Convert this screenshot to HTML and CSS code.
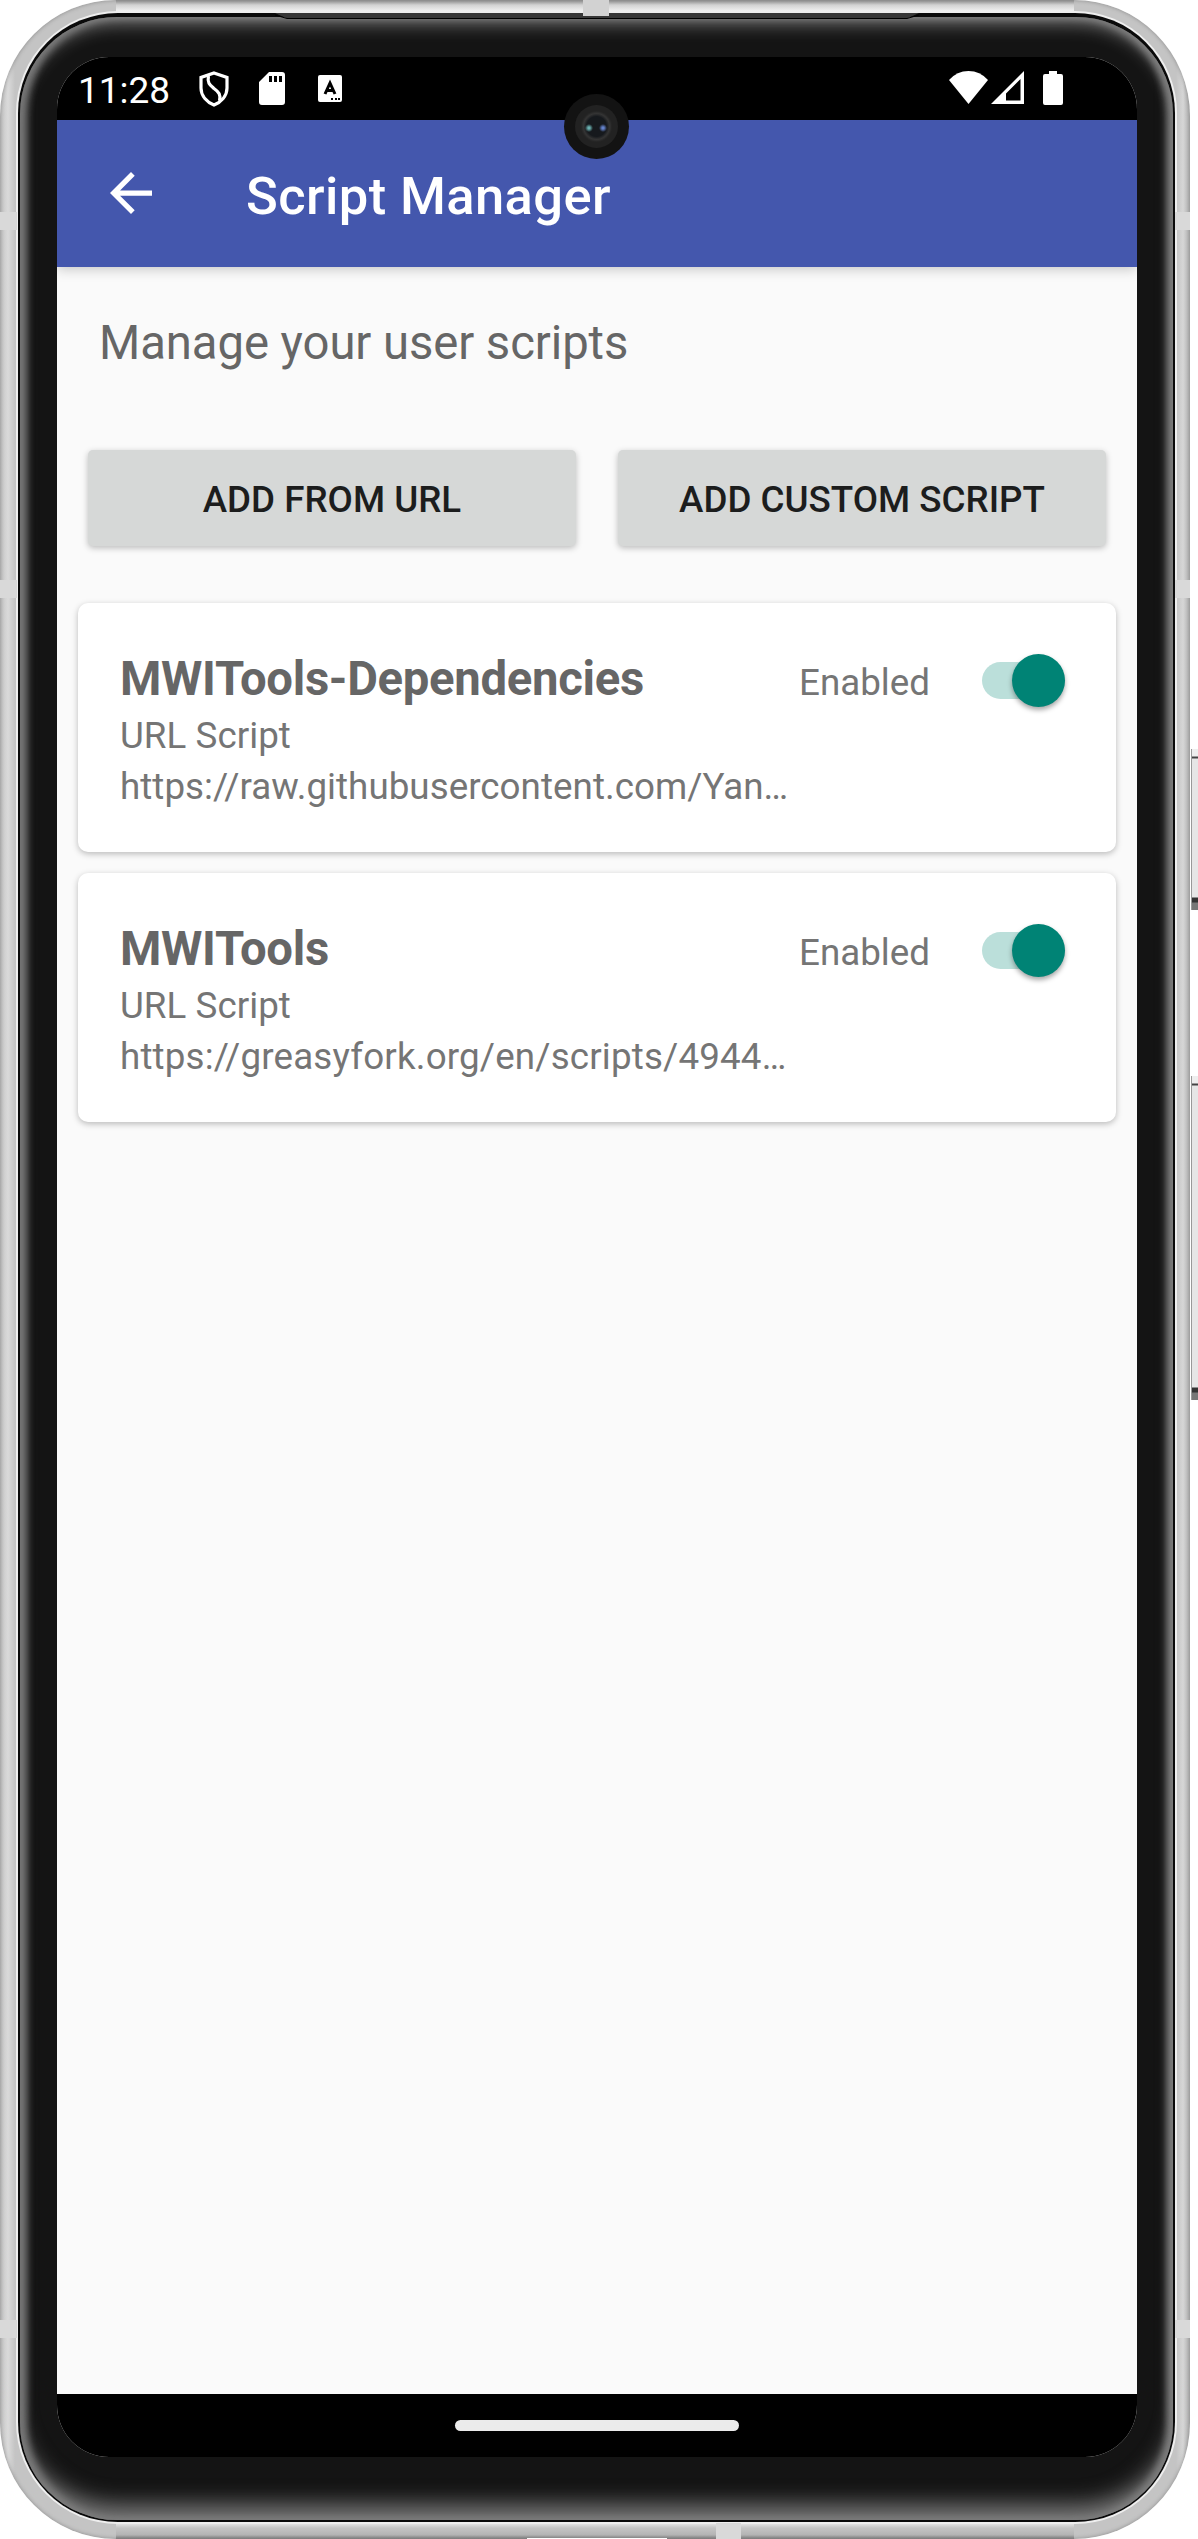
FILE: index.html
```html
<!DOCTYPE html>
<html lang="en">
<head>
<meta charset="utf-8">
<title>Script Manager</title>
<link rel="stylesheet" href="styles.css">
</head>
<body>
<div class="stage">
  <span class="side-button power"></span>
  <span class="side-button volume"></span>
  <div class="frame">
    <span class="band band-top"></span>
    <span class="band band-l1"></span><span class="band band-r1"></span>
    <span class="band band-l2"></span><span class="band band-r2"></span>
    <span class="band band-l3"></span><span class="band band-r3"></span>
    <span class="band band-bottom"></span>
    <span class="port"></span>
    <div class="rim">
      <div class="bezel">
        <svg class="speaker" width="644" height="7" viewBox="0 0 644 7"><path d="M0 0h644L632 5.5H12Z" fill="#373737"/><path d="M0 2L12 5.5H632L644 2" fill="none" stroke="#000"/></svg>
        <div class="screen">
          <header class="status">
            <span class="clock">11:28</span>
            <svg class="ic-shield" width="30" height="36" viewBox="0 0 30 36" fill="none" stroke="#fff" stroke-width="3.2"><path d="M15 2L28 6.5V17C28 25 22 31 15 34C8 31 2 25 2 17V6.500Z"/><path d="M9.500 5C8 12 11 14 15 17.500C20 21 22 24 20.500 30"/></svg>
            <svg class="ic-sd" width="26" height="33" viewBox="0 0 26 33"><path fill="#fff" fill-rule="evenodd" d="M10 0H23Q26 0 26 3V30Q26 33 23 33H3Q0 33 0 30V10ZM10 4V10H13V4ZM15 4V10H18V4ZM20 4V10H23V4Z"/></svg>
            <svg class="ic-a" width="24" height="27" viewBox="0 0 24 27"><rect width="24" height="27" rx="2" fill="#fff"/><path d="M7 19L12 8L17 19M9 15.500H15" fill="none" stroke="#000" stroke-width="3"/><path d="M13 24h2m2 0h2m1 0h2" stroke="#000" stroke-width="2"/></svg>
            <span class="grow"></span>
            <svg class="ic-wifi" width="39" height="33" viewBox="0 0 39 33"><path fill="#fff" d="M0 9Q8 0 19.500 0T39 9L19.500 33Z"/></svg>
            <svg class="ic-cell" width="33" height="33" viewBox="0 0 33 33"><path fill="#fff" fill-rule="evenodd" d="M33 0V33H0ZM29.500 8L15 22.500V29.500H29.500Z"/></svg>
            <svg class="ic-batt" width="20" height="34" viewBox="0 0 20 34"><path fill="#fff" d="M6 0H14V3H18Q20 3 20 5V32Q20 34 18 34H2Q0 34 0 32V5Q0 3 2 3H6Z"/></svg>
          </header>
          <span class="camera"><span class="lens"><span class="iris"></span></span></span>
          <div class="appbar">
            <svg class="back" width="42" height="42" viewBox="4 4 16 16"><path fill="#fff" d="M20 11H7.830L13.420 5.410L12 4L4 12L12 20L13.410 18.590L7.830 13H20V11Z"/></svg>
            <h1>Script Manager</h1>
          </div>
          <main class="content">
            <p class="intro">Manage your user scripts</p>
            <div class="actions">
              <button class="btn">ADD FROM URL</button>
              <button class="btn">ADD CUSTOM SCRIPT</button>
            </div>
            <section class="list">
              <article class="card">
                <div class="info">
                  <h2>MWITools-Dependencies</h2>
                  <p>URL Script</p>
                  <p>https://raw.githubusercontent.com/Yan…</p>
                </div>
                <span class="state">Enabled</span>
                <span class="switch"><span class="thumb"></span></span>
              </article>
              <article class="card">
                <div class="info">
                  <h2>MWITools</h2>
                  <p>URL Script</p>
                  <p class="loose">https://greasyfork.org/en/scripts/4944…</p>
                </div>
                <span class="state">Enabled</span>
                <span class="switch"><span class="thumb"></span></span>
              </article>
            </section>
          </main>
          <footer class="nav"><span class="handle"></span></footer>
        </div>
      </div>
    </div>
  </div>
</div>
</body>
</html>
```
FILE: styles.css
```css
* { box-sizing: border-box; }
body { margin: 0; background: #fff; font-family: Roboto, sans-serif; }
h1, h2, p { margin: 0; }
svg { display: block; flex: none; }

.stage { position: relative; width: 1198px; height: 2539px; overflow: hidden; }

/* Phone body */
.frame {
  position: relative;
  width: 1190px;
  height: 2539px;
  padding: 13px 15px 17px 18px;
  border-radius: 116px;
  background:
    linear-gradient(#8e8e8e, #d2d2d2 5px, #f5f5f5 12px) 116px 0 / 958px 13px no-repeat,
    linear-gradient(#e8e8e8, #c4c4c4 5px, #b4b4b4 12px, #777) 116px 100% / 958px 16px no-repeat,
    linear-gradient(90deg, #c4c4c4, #dadada 8px, #c4c4c4 15px, #c4c4c4 1176px, #d6d6d6 1183px, #b0b0b0);
  box-shadow: inset 0 0 4px #888;
}
.rim {
  height: 2509px;
  padding: 4px 2px 2px;
  border-radius: 100px;
  background: #0a0a0a;
  box-shadow: 0 0 0 2px #eee;
}
.bezel {
  position: relative;
  height: 2503px;
  padding: 40px 34px 62px 37px;
  border-radius: 97px;
  background: #141414;
  box-shadow:
    inset 0 -22px 22px -7px #7c7c7c,
    inset 0 13px 18px -7px #808080,
    inset 7px 0 7px #707070,
    inset -6px 0 7px #808080;
}
.speaker { position: absolute; left: 255px; top: -4px; }
.screen {
  position: relative;
  display: flex;
  flex-direction: column;
  width: 1080px;
  height: 2400px;
  border-radius: 52px;
  background: #fafafa;
  overflow: hidden;
}

.band { position: absolute; width: 17px; height: 18px; background: #d9d9d9; }
.band-top { left: 583px; top: 0; width: 26px; height: 16px; background: #d2d2d2; z-index: 1; }
.band-bottom { left: 716px; bottom: 0; width: 25px; height: 16px; }
.band-l1 { left: 0; top: 212px; }
.band-r1 { right: 0; top: 212px; width: 15px; }
.band-l2 { left: 0; top: 580px; }
.band-r2 { right: 0; top: 580px; width: 15px; }
.band-l3 { left: 0; top: 2320px; }
.band-r3 { right: 0; top: 2320px; width: 15px; }
.port { position: absolute; left: 527px; bottom: 0; width: 140px; height: 1px; background: #fff; }

.side-button {
  position: absolute;
  left: 1191px;
  width: 7px;
  border-left: 1px solid #999;
  background: linear-gradient(#eee 7px, #444 8px, #444 9px, #e6e6e6 10px, #e6e6e6 calc(100% - 13px), #333 calc(100% - 12px), #333 calc(100% - 8px), #777 calc(100% - 7px));
}
.power { top: 749px; height: 161px; }
.volume { top: 1076px; height: 324px; }

/* Status bar */
.status { display: flex; height: 63px; flex: none; background: #000; color: #fff; padding: 0 74px 0 21px; }
.clock { width: 121px; font-size: 37px; line-height: 67px; }
.ic-shield { margin-top: 14px; }
.ic-sd { margin: 15px 0 0 30px; }
.ic-a { margin: 18px 0 0 33px; }
.grow { flex: 1; }
.ic-wifi { margin-top: 14px; }
.ic-cell { margin: 14px 0 0 3px; }
.ic-batt { margin: 14px 0 0 19px; }

.camera {
  position: absolute;
  left: 507px;
  top: 37px;
  width: 65px;
  height: 65px;
  padding: 11px;
  border-radius: 50%;
  background: #131313;
  z-index: 2;
}
.lens { display: block; width: 43px; height: 43px; padding: 6px; border-radius: 50%; background: #222; }
.iris {
  display: block;
  width: 31px;
  height: 31px;
  border-radius: 50%;
  background: radial-gradient(circle at 8px 17px, #6ab0b0 1px, transparent 4px),
    radial-gradient(circle at 22px 17px, #6482cc 1px, transparent 4px),
    radial-gradient(circle, #16191d 10px, #343434 13px, #262626 15px);
}

.appbar {
  position: relative;
  display: flex;
  flex: none;
  height: 147px;
  padding-left: 53px;
  background: #4457ad;
  color: #fff;
  box-shadow: 0 2px 12px rgba(0, 0, 0, .22);
  z-index: 1;
}
.back { margin-top: 52px; }
h1 { margin-left: 94px; font-size: 52.5px; font-weight: 500; line-height: 152px; letter-spacing: .4px; white-space: nowrap; }

/* Page */
.content { flex: 1; padding: 43px 21px 0; }
.intro { padding-left: 21px; font-size: 47.25px; line-height: 66px; letter-spacing: -.07px; color: #666; }
.actions { display: flex; gap: 42px; margin: 74px 10px 0; }
.btn {
  flex: 1;
  height: 96px;
  padding: 2px 0 0;
  border: 0;
  border-radius: 5px;
  background: #d6d8d7;
  color: #1c1d1d;
  font: 500 36.75px/43px Roboto, sans-serif;
  box-shadow: 0 2px 6px rgba(0, 0, 0, .25);
}
.list { display: flex; flex-direction: column; gap: 21px; margin-top: 57px; }
.card {
  display: flex;
  height: 249px;
  padding: 43px 51px 0 42px;
  border-radius: 10px;
  background: #fff;
  box-shadow: 0 2px 6px rgba(0, 0, 0, .26);
}
.info { flex: 1; white-space: nowrap; }
h2 { font-size: 47.25px; line-height: 67px; letter-spacing: -.3px; font-weight: 700; color: #666; }
.info p { font-size: 36.75px; line-height: 51px; letter-spacing: .04px; color: #757575; }
.info p:first-of-type { margin-top: -3px; }
.info .loose { letter-spacing: .17px; }
.state { margin-right: 52px; font-size: 36.75px; line-height: 74px; color: #757575; }
.switch { position: relative; width: 83px; height: 37px; margin-top: 16px; border-radius: 19px; background: #bbdfda; }
.thumb { position: absolute; right: 0; top: -8px; width: 53px; height: 53px; border-radius: 50%; background: #008375; box-shadow: 0 3px 5px rgba(0, 0, 0, .35); }

.nav { display: flex; flex: none; align-items: center; justify-content: center; height: 63px; background: #000; }
.handle { width: 284px; height: 11px; border-radius: 5.5px; background: #ebebeb; }
```
